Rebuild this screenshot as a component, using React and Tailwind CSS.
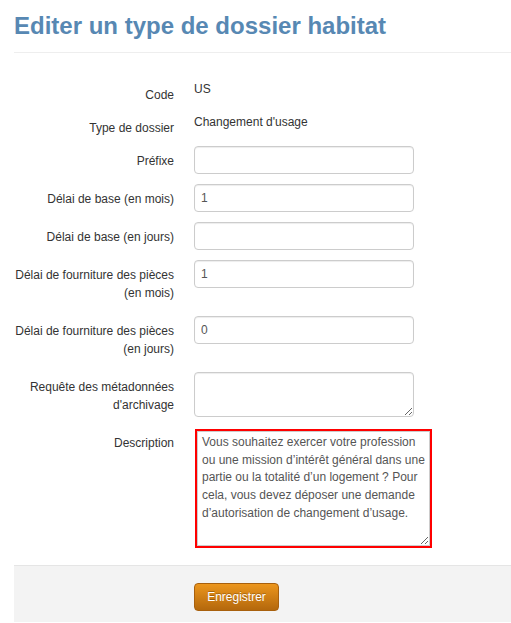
import React from "react";

const font = { fontFamily: '"Liberation Sans", Arial, sans-serif' };

function Label({ children, className = "" }) {
  return (
    <div className={"w-[160px] shrink-0 text-right text-[12px] text-[#333] pt-[6px] " + className}>
      {children}
    </div>
  );
}

function InputRow({ label, value = "", twoLine = false }) {
  return (
    <div className="flex items-start mb-[10px]">
      <Label className={twoLine ? "leading-[18px] pb-[4px]" : "leading-[19px]"}>{label}</Label>
      <input
        type="text"
        defaultValue={value}
        className="ml-[20px] w-[220px] h-[28px] border border-[#ccc] rounded-[4px] px-[6px] text-[12px] text-[#555] bg-white shadow-[inset_0_1px_1px_rgba(0,0,0,0.075)] outline-none"
        style={font}
      />
    </div>
  );
}

export default function App() {
  return (
    <div className="bg-white h-[623px] overflow-hidden pl-[14px]" style={font}>
      <h1 className="pt-[12px] text-[24px] leading-[27px] font-bold text-[#5788b3] pb-[13px] border-b border-[#eee]">
        Editer un type de dossier habitat
      </h1>

      <div className="pt-[27px]">
        <div className="flex items-start mb-[10px] h-[23px]">
          <Label className="leading-[19px]">Code</Label>
          <div className="ml-[20px] pt-[1px] text-[12px] leading-[17px] text-[#333]">US</div>
        </div>
        <div className="flex items-start mb-[10px] h-[23px]">
          <Label className="leading-[19px]">Type de dossier</Label>
          <div className="ml-[20px] pt-[1px] text-[12px] leading-[17px] text-[#333]">Changement d'usage</div>
        </div>

        <InputRow label="Préfixe" />
        <InputRow label="Délai de base (en mois)" value="1" />
        <InputRow label="Délai de base (en jours)" />
        <InputRow label="Délai de fourniture des pièces (en mois)" value="1" twoLine />
        <InputRow label="Délai de fourniture des pièces (en jours)" value="0" twoLine />

        <div className="flex items-start mb-[10px]">
          <Label className="leading-[18px] pb-[4px]">Requête des métadonnées d'archivage</Label>
          <textarea
            className="ml-[20px] w-[220px] h-[45px] border border-[#ccc] rounded-[4px] px-[6px] py-[4px] text-[12px] text-[#555] bg-white shadow-[inset_0_1px_1px_rgba(0,0,0,0.075)] outline-none"
            style={font}
          />
        </div>

        <div className="flex items-start h-[118px] mb-[19px]">
          <Label className="leading-[19px]">Description</Label>
          <textarea
            className="ml-[23px] mt-[3px] w-[233px] h-[115px] border border-[#ccc] pl-[4px] pr-[2px] pt-[2px] text-[12px] leading-[17.7px] text-[#555] bg-white outline-2 outline-solid outline-[#f00]"
            style={font}
            defaultValue={"Vous souhaitez exercer votre profession ou une mission d’intérêt général dans une partie ou la totalité d’un logement ? Pour cela, vous devez déposer une demande d’autorisation de changement d’usage."}
          />
        </div>
      </div>

      <div className="border-t border-[#e5e5e5] bg-[#f3f3f3] pt-[17px] pb-[11px] pl-[180px]">
        <button
          className="h-[28px] w-[85px] rounded-[4px] border border-[#a8600d] bg-gradient-to-b from-[#ec961d] to-[#b4680c] text-white text-[12px] [text-shadow:0_-1px_0_rgba(0,0,0,0.25)]"
          style={font}
        >
          Enregistrer
        </button>
      </div>
    </div>
  );
}
